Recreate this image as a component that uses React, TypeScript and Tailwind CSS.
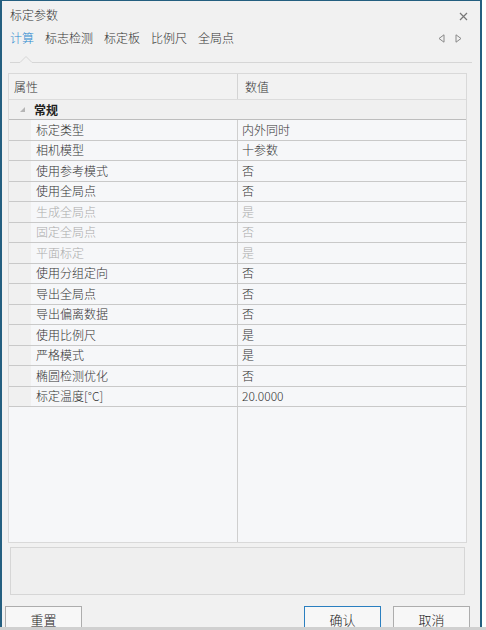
import React from "react";

type Row = { label: string; value: string; disabled?: boolean };

const ROWS: Row[] = [
  { label: "标定类型", value: "内外同时" },
  { label: "相机模型", value: "十参数" },
  { label: "使用参考模式", value: "否" },
  { label: "使用全局点", value: "否" },
  { label: "生成全局点", value: "是", disabled: true },
  { label: "固定全局点", value: "否", disabled: true },
  { label: "平面标定", value: "是", disabled: true },
  { label: "使用分组定向", value: "否" },
  { label: "导出全局点", value: "否" },
  { label: "导出偏离数据", value: "否" },
  { label: "使用比例尺", value: "是" },
  { label: "严格模式", value: "是" },
  { label: "椭圆检测优化", value: "否" },
  { label: "标定温度[°C]", value: "20.0000" },
];

const TABS = ["计算", "标志检测", "标定板", "比例尺", "全局点"];

function PropRow({ row }: { row: Row }) {
  const tone = row.disabled ? "text-[#ababab]" : "text-[#333]";
  return (
    <div className="flex h-[20.5px] border-b border-[#c9c9c9]">
      <div className="w-[22px] shrink-0 bg-[#f0f0f0]" />
      <div className={`w-[207px] shrink-0 pl-[5px] flex items-center border-r border-[#cfcfcf] ${tone}`}>
        {row.label}
      </div>
      <div className={`flex-1 pl-[4px] flex items-center ${tone}`}>{row.value}</div>
    </div>
  );
}

export default function App() {
  return (
    <div
      className="w-[486px] h-[630px] bg-white overflow-hidden text-[12px] leading-none font-light flex flex-col"
      style={{ fontFamily: '"Noto Sans CJK SC", "Noto Sans", sans-serif' }}
    >
      <div className="w-[482px] h-[627px] shrink-0 overflow-hidden bg-[#f1f1f1] border-t border-l-2 border-r-2 border-[#245f80] flex flex-col">
        {/* Title bar */}
        <div className="h-[26px] shrink-0 flex items-center justify-between pl-[8px] pr-[12px] text-[#333]">
          <span className="pt-[2px]">标定参数</span>
          <svg width="9" height="9" viewBox="0 0 9 9" className="mt-[4px]">
            <path d="M1 1L8 8M8 1L1 8" stroke="#777" strokeWidth="1.2" />
          </svg>
        </div>

        {/* Tabs */}
        <div className="h-[22px] shrink-0 flex items-center pl-[8px] pr-[18px] text-[12px]">
          <div className="flex gap-[11px]">
            {TABS.map((t, i) => (
              <span key={t} className={i === 0 ? "text-[#2d8ad0]" : "text-[#333]"}>
                {t}
              </span>
            ))}
          </div>
          <div className="ml-auto flex gap-[10px] items-center">
            <svg width="7" height="9" viewBox="0 0 7 9">
              <path d="M6 0.8L1 4.5L6 8.2Z" fill="none" stroke="#888" strokeWidth="1" />
            </svg>
            <svg width="7" height="9" viewBox="0 0 7 9">
              <path d="M1 0.8L6 4.5L1 8.2Z" fill="none" stroke="#888" strokeWidth="1" />
            </svg>
          </div>
        </div>

        {/* Tab underline with caret */}
        <div className="h-[24px] shrink-0 pl-[6px] pr-[8px]">
          <svg width="464" height="24" viewBox="0 0 464 24">
            <path d="M2 13.5H12L18 7.5L24 13.5H464" fill="none" stroke="#d6d6d6" strokeWidth="1" />
          </svg>
        </div>

        {/* Property grid */}
        <div className="ml-[6px] w-[459px] h-[470px] shrink-0 border border-[#d9d9d9] bg-[#f6f7f9] flex flex-col">
          <div className="h-[26px] flex border-b border-[#dcdcdc] bg-[#f2f2f2] text-[#333]">
            <div className="w-[229px] shrink-0 pl-[5px] flex items-center border-r border-[#d4d4d4]">属性</div>
            <div className="flex-1 pl-[7px] flex items-center">数值</div>
          </div>
          <div className="h-[20px] flex items-center border-b border-[#bdbdbd] bg-[#f0f0f0]">
            <svg width="7" height="7" viewBox="0 0 7 7" className="ml-[10px]">
              <path d="M6 1V6H1Z" fill="#b5b5b5" />
            </svg>
            <span className="ml-[8px] font-bold text-[#222]">常规</span>
          </div>
          {ROWS.map((r) => (
            <PropRow key={r.label} row={r} />
          ))}
          <div className="flex-1 flex">
            <div className="w-[229px] shrink-0 border-r border-[#cfcfcf]" />
            <div className="flex-1" />
          </div>
        </div>

        {/* Description */}
        <div className="mt-[4px] ml-[8px] w-[455px] h-[48px] shrink-0 bg-[#efefef] border border-[#d6d6d6]" />

        {/* Buttons */}
        <div className="mt-[11px] flex items-start shrink-0">
          <button className="ml-[3px] w-[77px] h-[26px] bg-[#f7f7f7] border border-[#adadad] text-[#222] text-[13px]">
            重置
          </button>
          <button className="ml-auto w-[77px] h-[26px] bg-[#f7f7f7] border border-[#2a7fc0] text-[#222] text-[13px]">
            确认
          </button>
          <button className="ml-[12px] mr-[10px] w-[77px] h-[26px] bg-[#f7f7f7] border border-[#adadad] text-[#222] text-[13px]">
            取消
          </button>
        </div>
      </div>
      <div className="h-[3px] w-full bg-[#d0d0d0]" />
    </div>
  );
}
